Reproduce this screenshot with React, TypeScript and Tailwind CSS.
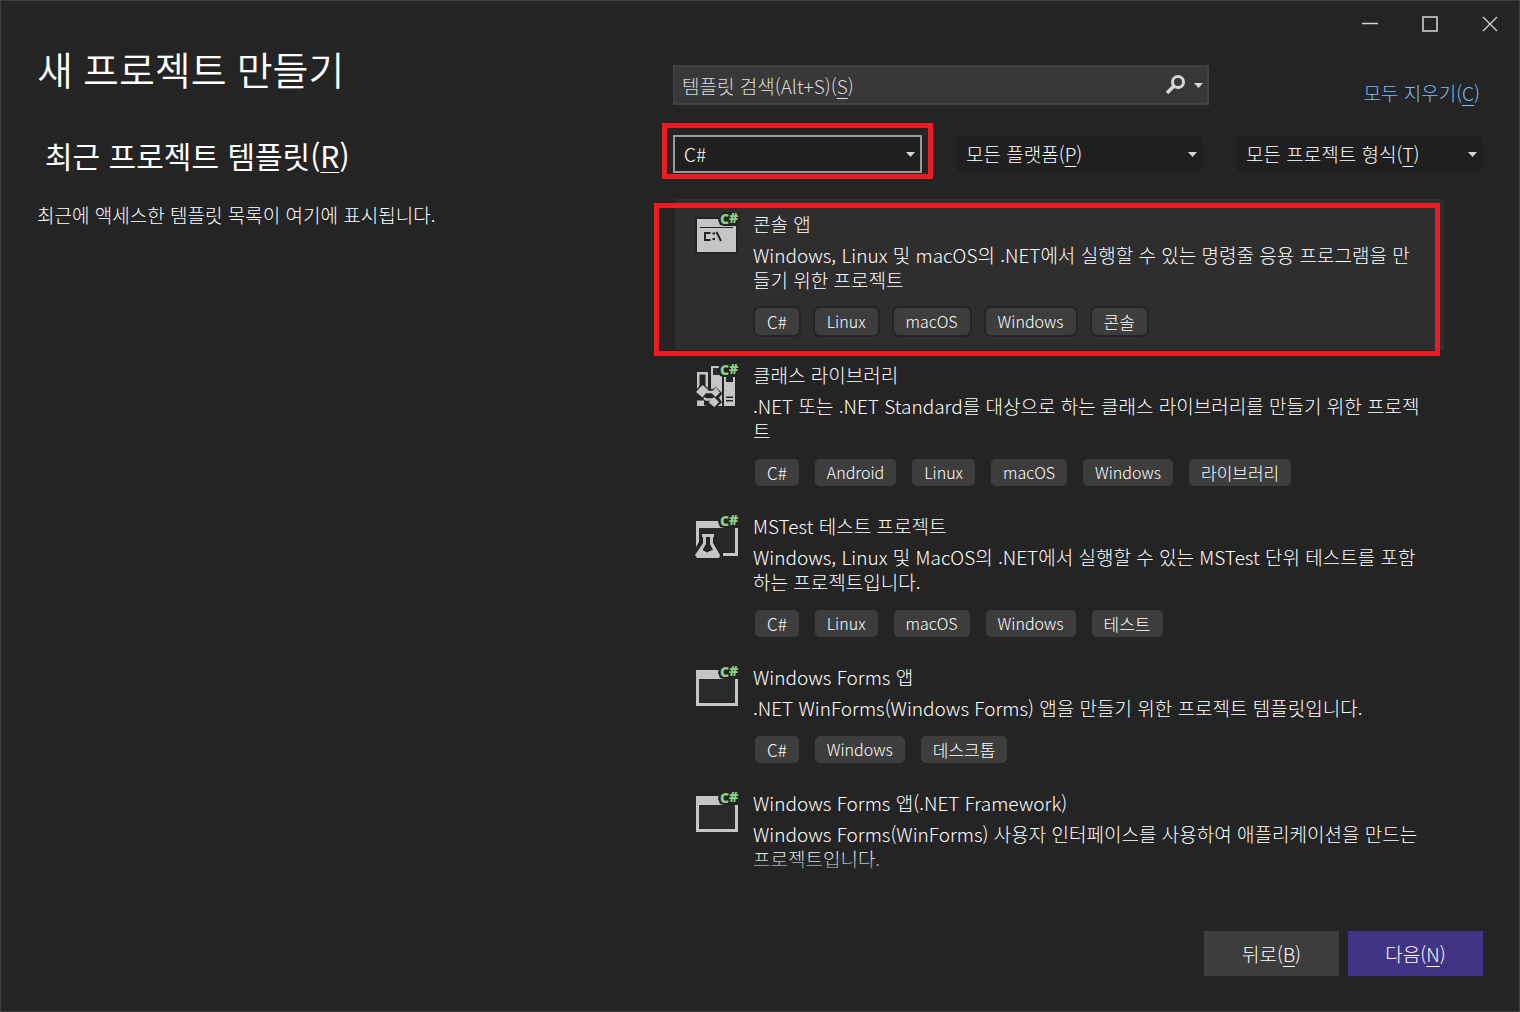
import type { ReactNode } from 'react';

type IconName = 'console' | 'library' | 'test' | 'window';

interface Template {
    id: string;
    icon: IconName;
    title: string;
    description: string;
    tags: string[];
    selected?: boolean;
}

const templates: Template[] = [
    {
        id: 'console',
        icon: 'console',
        title: '콘솔 앱',
        description:
            'Windows, Linux 및 macOS의 .NET에서 실행할 수 있는 명령줄 응용 프로그램을 만\n들기 위한 프로젝트',
        tags: ['C#', 'Linux', 'macOS', 'Windows', '콘솔'],
        selected: true,
    },
    {
        id: 'classlib',
        icon: 'library',
        title: '클래스 라이브러리',
        description:
            '.NET 또는 .NET Standard를 대상으로 하는 클래스 라이브러리를 만들기 위한 프로젝\n트',
        tags: ['C#', 'Android', 'Linux', 'macOS', 'Windows', '라이브러리'],
    },
    {
        id: 'mstest',
        icon: 'test',
        title: 'MSTest 테스트 프로젝트',
        description:
            'Windows, Linux 및 MacOS의 .NET에서 실행할 수 있는 MSTest 단위 테스트를 포함\n하는 프로젝트입니다.',
        tags: ['C#', 'Linux', 'macOS', 'Windows', '테스트'],
    },
    {
        id: 'winforms',
        icon: 'window',
        title: 'Windows Forms 앱',
        description: '.NET WinForms(Windows Forms) 앱을 만들기 위한 프로젝트 템플릿입니다.',
        tags: ['C#', 'Windows', '데스크톱'],
    },
    {
        id: 'winforms-netfx',
        icon: 'window',
        title: 'Windows Forms 앱(.NET Framework)',
        description:
            'Windows Forms(WinForms) 사용자 인터페이스를 사용하여 애플리케이션을 만드는\n프로젝트입니다.',
        tags: [],
    },
];

// Underlined access key, e.g. (S)
function Key({ children }: { children: ReactNode }) {
    return (
        <>
            (<span className="underline underline-offset-4 decoration-1">{children}</span>)
        </>
    );
}

function Caret({ className }: { className?: string }) {
    return (
        <svg className={className} width="9" height="5" viewBox="0 0 9 5" aria-hidden="true">
            <path d="M0 0h9L4.5 5z" fill="#d6d6d6" />
        </svg>
    );
}

function TemplateIcon({ name }: { name: IconName }) {
    return (
        <svg width="50" height="50" viewBox="0 0 50 50" className="shrink-0" aria-hidden="true">
            {name === 'console' && (
                <>
                    <rect x="3" y="8" width="43" height="37" fill="#242424" />
                    <rect x="5" y="10" width="39" height="33" fill="#c5c5c5" />
                    <path d="M8 18.5h33" stroke="#242424" />
                    <path
                        d="M18.5 24H13v7h5.5M20.5 24.5h2.5M20.5 30h2.5M24.5 23l4.5 9"
                        fill="none"
                        stroke="#242424"
                        strokeWidth="2"
                    />
                </>
            )}
            {name === 'library' && (
                <>
                    <path d="M5 12h11v34H5z" fill="#c5c5c5" />
                    <path d="M7.500 14.500h6V26h-6z" fill="#242424" />
                    <path d="M19 6h11v40H19z" fill="#c5c5c5" />
                    <path d="M21 8h9v7h-9z" fill="#2e2e2e" />
                    <path d="M32 17h11v29H32z" fill="#c5c5c5" />
                    <path d="M34 17h7v5h-7zM34 36.500h7V38h-7zM34 40h7v1.500h-7z" fill="#242424" />
                    <path
                        d="M10 22.500l7 6.500h4l3-2 6.500 6.500-3.500 4 3 5-6 5H17l-3-2h-2v-5H4L2 33z"
                        fill="#242424"
                    />
                    <path
                        d="M10.500 25l6 5-6 7.500-6.500-5.500zM24 27.500l4 5-4.500 4.500-4.500-4.500zM22 37l5 5-4.500 5-6-4.500z"
                        fill="#c5c5c5"
                    />
                    <path d="M14 32h7M12 38l2 1.500h7" fill="none" stroke="#c5c5c5" strokeWidth="2.500" />
                    <path d="M5 42h5l2 4H5z" fill="#c5c5c5" />
                </>
            )}
            {name === 'test' && (
                <>
                    <path d="M4 10h42v35H4z" fill="#c5c5c5" />
                    <path d="M7 17h36v25H7z" fill="#282826" />
                    <path d="M8 21h16v7l7 14v7H2V40l6-11z" fill="#242424" />
                    <path d="M10 23h12v3h-1v6l7 12-1 3H5l-2-3 8-12v-6h-1z" fill="#c5c5c5" />
                    <path d="M14 26h4v7l3 6-3 1-3 1.500-4.500-2.500 3.500-6z" fill="#242424" />
                </>
            )}
            {name === 'window' && (
                <>
                    <path d="M4 8h42v36H4z" fill="#c5c5c5" />
                    <path d="M7 17h36v24H7z" fill="#2a2a28" />
                </>
            )}
            <path d="M48 3H32l-5 3-1 5 2 5 4 1h16z" fill="#242424" />
            <text
                x="28 37"
                y="15 14"
                fontSize="14"
                fontWeight="800"
                fontFamily="'Open Sans', sans-serif"
                fill="#89d185"
            >
                C#
            </text>
        </svg>
    );
}

function FilterSelect({ id, label, accessKey }: { id: string; label: string; accessKey: string }) {
    return (
        <div className="relative h-[34px]">
            <select id={id} className="h-full w-full appearance-none bg-[#1f1f1f] px-2 outline-none">
                <option value="" />
            </select>
            <label
                htmlFor={id}
                className="pointer-events-none absolute inset-y-0 left-[9px] flex items-center whitespace-nowrap"
            >
                <span>
                    {label}
                    <Key>{accessKey}</Key>
                </span>
            </label>
            <Caret className="pointer-events-none absolute right-[5px] top-[15px]" />
        </div>
    );
}

function Tag({ label, outlined }: { label: string; outlined?: boolean }) {
    const isLatin = /^\w+$/.test(label);

    return (
        <li
            className={[
                'h-[27px] rounded-[5px] bg-[#3d3d3d] px-3 leading-[27px]',
                isLatin ? 'text-[16px]' : 'text-[17px]',
                outlined ? 'ring-2 ring-[#242424]' : '',
            ].join(' ')}
        >
            {label}
        </li>
    );
}

function TemplateItem({ template }: { template: Template }) {
    return (
        <li
            className={[
                'flex gap-[11px] pb-[15px] pl-[17px]',
                template.selected ? 'bg-[#2e2e2e]' : '',
            ].join(' ')}
        >
            <div className="pt-[10px]">
                <TemplateIcon name={template.icon} />
            </div>
            <div className="pt-[13px]">
                <h3 className="leading-6">{template.title}</h3>
                <p className="mt-[6px] whitespace-pre leading-[25px]">{template.description}</p>
                {template.tags.length > 0 && (
                    <ul className="mt-4 flex gap-4 pl-[2px]">
                        {template.tags.map((tag) => (
                            <Tag key={tag} label={tag} outlined={template.selected} />
                        ))}
                    </ul>
                )}
            </div>
        </li>
    );
}

export default function App() {
    return (
        <div
            lang="ko"
            className="flex min-h-screen flex-col bg-[#242424] font-['Noto_Sans_CJK_KR',sans-serif] text-[19px] font-light text-white inset-ring inset-ring-[#3f3f3f]"
        >
            {/* Window buttons */}
            <header className="flex h-12 justify-end">
                <button aria-label="최소화" className="flex w-[60px] items-center justify-center">
                    <svg width="16" height="16" viewBox="0 0 16 16">
                        <path d="M0 7.500h16" stroke="#d6d6d6" strokeWidth="1.500" />
                    </svg>
                </button>
                <button aria-label="최대화" className="flex w-[60px] items-center justify-center">
                    <svg width="16" height="16" viewBox="0 0 16 16">
                        <path d="M1 1h14v14H1z" fill="none" stroke="#d6d6d6" strokeWidth="1.500" />
                    </svg>
                </button>
                <button aria-label="닫기" className="flex w-[60px] items-center justify-center">
                    <svg width="16" height="16" viewBox="0 0 16 16">
                        <path d="M1 1l14 14M15 1L1 15" stroke="#d6d6d6" strokeWidth="1.300" />
                    </svg>
                </button>
            </header>

            <main className="grid grid-cols-[636fr_809fr] pl-[37px] pr-[38px]">
                {/* Recent templates */}
                <section>
                    <h1 className="font-['Open_Sans','Noto_Sans_CJK_KR',sans-serif] text-[39px] font-[350] leading-[44px]">
                        새 프로젝트 만들기
                    </h1>
                    <h2 className="mt-[43px] pl-2 text-[30px] font-normal leading-10">
                        최근 프로젝트 템플릿<Key>R</Key>
                    </h2>
                    <p className="mt-7 leading-6">최근에 액세스한 템플릿 목록이 여기에 표시됩니다.</p>
                </section>

                {/* Search, filters and template list */}
                <section className="pt-[17px]">
                    <div className="flex justify-between">
                        <div className="relative h-10 w-[536px]">
                            <input
                                id="search"
                                type="text"
                                className="h-full w-full border-2 border-[#424242] bg-[#383838] pl-2 pr-12 outline-none"
                            />
                            <label
                                htmlFor="search"
                                className="pointer-events-none absolute inset-y-0 left-[9px] flex items-center pt-[2px] text-[#dcdcdc]"
                            >
                                <span>
                                    템플릿 검색(Alt+S)<Key>S</Key>
                                </span>
                            </label>
                            <button aria-label="검색" className="absolute inset-y-0 right-[6px] flex items-center gap-2">
                                <svg width="21" height="20" viewBox="0 0 21 20">
                                    <circle cx="13" cy="7" r="5.500" fill="none" stroke="#d6d6d6" strokeWidth="3" />
                                    <path d="M9.500 10.500L2 18" stroke="#d6d6d6" strokeWidth="3.500" />
                                </svg>
                                <Caret />
                            </button>
                        </div>
                        <a href="#clear" className="mt-4 pr-[2px] leading-6 text-[#7cbcf5]">
                            모두 지우기<Key>C</Key>
                        </a>
                    </div>

                    <div className="mt-[30px] grid grid-cols-[249fr_245fr_245fr] items-center gap-[35px]">
                        <div className="relative h-[38px]">
                            <select
                                aria-label="언어"
                                className="h-full w-full appearance-none border-2 border-[#999999] bg-[#1f1f1f] pl-[9px] outline-none"
                            >
                                <option>C#</option>
                            </select>
                            <Caret className="pointer-events-none absolute right-[7px] top-[17px]" />
                            <div className="pointer-events-none absolute -inset-x-[11px] -bottom-[6px] -top-3 border-5 border-[#ed1c24]" />
                        </div>
                        <FilterSelect id="platform" label="모든 플랫폼" accessKey="P" />
                        <FilterSelect id="project-type" label="모든 프로젝트 형식" accessKey="T" />
                    </div>

                    <div className="relative ml-[2px] mr-[38px] mt-[26px]">
                        <ul>
                            {templates.map((template) => (
                                <TemplateItem key={template.id} template={template} />
                            ))}
                        </ul>
                        <div className="pointer-events-none absolute inset-x-0 bottom-0 h-9 bg-linear-to-b from-transparent to-[#242424]" />
                        <div className="pointer-events-none absolute -left-[21px] right-1 top-1 h-[153px] border-5 border-[#ed1c24]" />
                    </div>
                </section>
            </main>

            <footer className="mt-auto flex justify-end gap-[9px] px-[37px] pb-9">
                <button className="h-[45px] w-[135px] bg-[#3d3d3d] pt-[2px]">
                    뒤로<Key>B</Key>
                </button>
                <button className="h-[45px] w-[135px] bg-[#413485] pt-[2px]">
                    다음<Key>N</Key>
                </button>
            </footer>
        </div>
    );
}
